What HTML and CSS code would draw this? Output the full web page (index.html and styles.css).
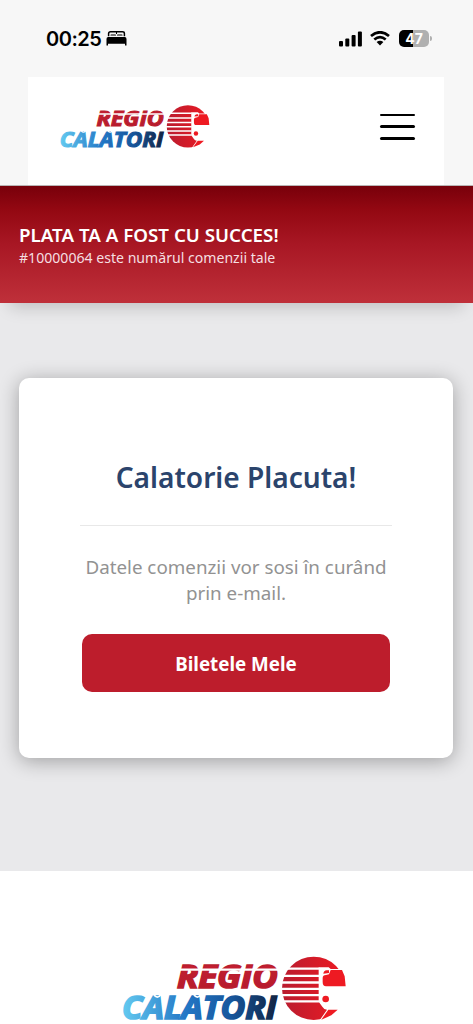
FILE: index.html
```html
<!DOCTYPE html>
<html lang="ro">
<head>
<meta charset="utf-8">
<meta name="viewport" content="width=device-width">
<title>Regio Călători</title>
<link rel="stylesheet" href="styles.css">
</head>
<body>
<svg class="defs" aria-hidden="true">
  <defs>
    <linearGradient id="red" x1="0" x2="1" y1="0" y2="0"><stop offset="0" stop-color="#b91c2f"/><stop offset="1" stop-color="#ee1a22"/></linearGradient>
    <linearGradient id="crimson" x1="0" x2="0" y1="0" y2="1"><stop offset="0" stop-color="#cb2033"/><stop offset="1" stop-color="#b01a2b"/></linearGradient>
    <linearGradient id="blue" gradientUnits="userSpaceOnUse" x1="42" x2="502" y1="0" y2="0"><stop offset="0" stop-color="#62c8ef"/><stop offset=".4" stop-color="#2377c6"/><stop offset=".7" stop-color="#17569c"/><stop offset="1" stop-color="#122443"/></linearGradient>
    <symbol id="logo" viewBox="39 47 669 193">
      <text class="logo-text" x="201" y="141" textLength="302" lengthAdjust="spacingAndGlyphs" fill="url(#crimson)" stroke="#bb1d2f" stroke-width="5">REGIO</text>
      <path d="M195 87H512" stroke="#fff" stroke-width="7"/>
      <text class="logo-text" x="36" y="236" textLength="464" lengthAdjust="spacingAndGlyphs" fill="url(#blue)" stroke="url(#blue)" stroke-width="5">CALATORI</text>
      <path d="M132 162q10 15 20 0M252 162q10 15 20 0" fill="none" stroke="#fff" stroke-width="5"/>
      <circle cx="611" cy="143" r="95" fill="url(#red)"/>
      <path d="M510 84H628M510 105.500H628M510 125.500H628M510 144.500H628M510 163.500H628M510 182H628" stroke="#fff" stroke-width="7"/>
      <path d="M626 80H656L662 85H720V240H628L651 207Q642 207 637 198L626 183Z" fill="#fff"/>
      <path d="M662 88H696L704 107L707 137H648Q638 137 638 124V112Q638 103 648 103L657 101Z" fill="#ee1a22"/>
      <path d="M640 99Q641 90 650 89H657V97Z" fill="#ee1a22"/>
      <circle cx="647" cy="175" r="10" fill="#ee1a22"/>
      <path d="M655 207H683L664 224L634 237Z" fill="#ee1a22"/>
    </symbol>
  </defs>
</svg>
<div class="status">
  <span class="time">00:25</span>
  <svg class="bed" viewBox="0 0 21 15"><path d="M2.600 5.200V2.500Q2.600 .8 4.500 .8H16.500Q18.400 .8 18.400 2.500V5.200" fill="none" stroke="#000" stroke-width="1.500"/><path d="M10.500 .8V3" stroke="#000"/><path d="M4.500 5V4Q4.500 3 5.500 3H9Q10 3 10 4V5ZM11 5V4Q11 3 12 3H15.500Q16.500 3 16.500 4V5Z" fill="#777"/><path d="M.5 14.500V8Q.5 6 2.200 6H18.800Q20.500 6 20.500 8V14.500H19V12.700H2V14.500Z"/></svg>
  <svg class="signal" viewBox="0 0 24 16"><rect y="10" width="4" height="5.500" rx="1"/><rect x="6.300" y="7.500" width="4" height="8" rx="1"/><rect x="12.600" y="4" width="4" height="11.500" rx="1"/><rect x="18.900" y=".5" width="4" height="15" rx="1"/></svg>
  <svg class="wifi" viewBox="0 0 20 15"><path d="M1 5Q10-2.500 19 5M4.300 8.500Q10 3.800 15.700 8.500" fill="none" stroke="#000" stroke-width="2.700"/><path d="M6.600 11Q10 8.300 13.400 11L10 14.600Z"/></svg>
  <span class="battery"><span class="level">47</span></span>
</div>
<header class="header">
  <svg class="logo"><use href="#logo"/></svg>
  <div class="menu"><i></i><i></i><i></i></div>
</header>
<section class="banner">
  <h1>PLATA TA A FOST CU SUCCES!</h1>
  <p>#10000064 este numărul comenzii tale</p>
</section>
<main class="content">
  <div class="card">
    <h2>Calatorie Placuta!</h2>
    <p>Datele comenzii vor sosi în curând<br>prin e-mail.</p>
    <a class="button">Biletele Mele</a>
  </div>
</main>
<footer class="footer"><svg class="footer-logo"><use href="#logo"/></svg></footer>
</body>
</html>
```
FILE: styles.css
```css
* { box-sizing: border-box; }
html, body { height: 1024px; overflow: hidden; }
body { margin: 0; background: #f7f7f7; font-family: "Noto Sans", "Open Sans", sans-serif; }
h1, h2, p { margin: 0; }
svg { display: block; }
.defs { position: absolute; width: 0; height: 0; }
.logo-text { font: italic 700 98px "Open Sans", sans-serif; }
.status { height: 77px; padding: 0 44px 0 46px; display: flex; align-items: center; }
.time { width: 55px; font: 600 20px/24px Inter, sans-serif; letter-spacing: -.5px; white-space: nowrap; }
.bed { width: 21px; height: 15px; margin-left: 5px; }
.signal { width: 24px; height: 16px; margin-left: auto; }
.wifi { width: 20px; height: 15px; margin: 0 9px 0 7px; }
.battery { width: 30px; height: 17px; border-radius: 5px; background: linear-gradient(90deg, #000 47%, #b0b0b0 47%); color: #fff; font: 700 14px/17px Inter, sans-serif; text-align: center; position: relative; }
.battery::after { content: ""; position: absolute; right: -2.500px; top: 6px; width: 2px; height: 5px; border-radius: 0 3px 3px 0; background: #b0b0b0; }
.header { position: relative; z-index: 1; height: 108px; margin: 0 29px 0 28px; padding: 28px 29px 0 32px; background: #fff; display: flex; justify-content: space-between; }
.logo { width: 150px; height: 43px; }
.menu { width: 35px; height: 26px; margin-top: 8.500px; display: flex; flex-direction: column; justify-content: space-between; }
.menu i { height: 2.500px; border-radius: 2px; background: #000; }
.banner { position: relative; height: 118px; padding: 36px 19px; border-top: 1px solid #b9b4b4; color: #fff; background: linear-gradient(#78000a, #930812 20%, #a81724 50%, #bf303a); box-shadow: 0 14px 16px -10px rgba(0,0,0,.18); }
.banner h1 { font-size: 18.750px; line-height: 25px; font-weight: 600; white-space: nowrap; }
.banner p { font-size: 14.100px; line-height: 22px; color: #f5dfe1; white-space: nowrap; }
.content { height: 568px; padding: 75px 20px 0 19px; background: #e9e9eb; }
.card { height: 380px; padding: 78px 61px 0; border-radius: 10px; background: #fff; box-shadow: 0 3px 20px rgba(0,0,0,.32); text-align: center; }
.card h2 { height: 70px; border-bottom: 1px solid #e8e8e8; color: #2b446c; font-size: 28.100px; line-height: 42px; font-weight: 600; white-space: nowrap; }
.card p { margin-top: 28px; color: #929292; font-size: 18.800px; line-height: 26px; white-space: nowrap; }
.button { display: block; height: 58px; margin: 28px 2px 0; border-radius: 10px; background: #bd1d2c; color: #fff; font-size: 18.750px; line-height: 59px; font-weight: 700; }
.footer { height: 153px; padding: 85px 0 0 123px; background: #fff; }
.footer-logo { width: 223px; height: 65px; }
```
